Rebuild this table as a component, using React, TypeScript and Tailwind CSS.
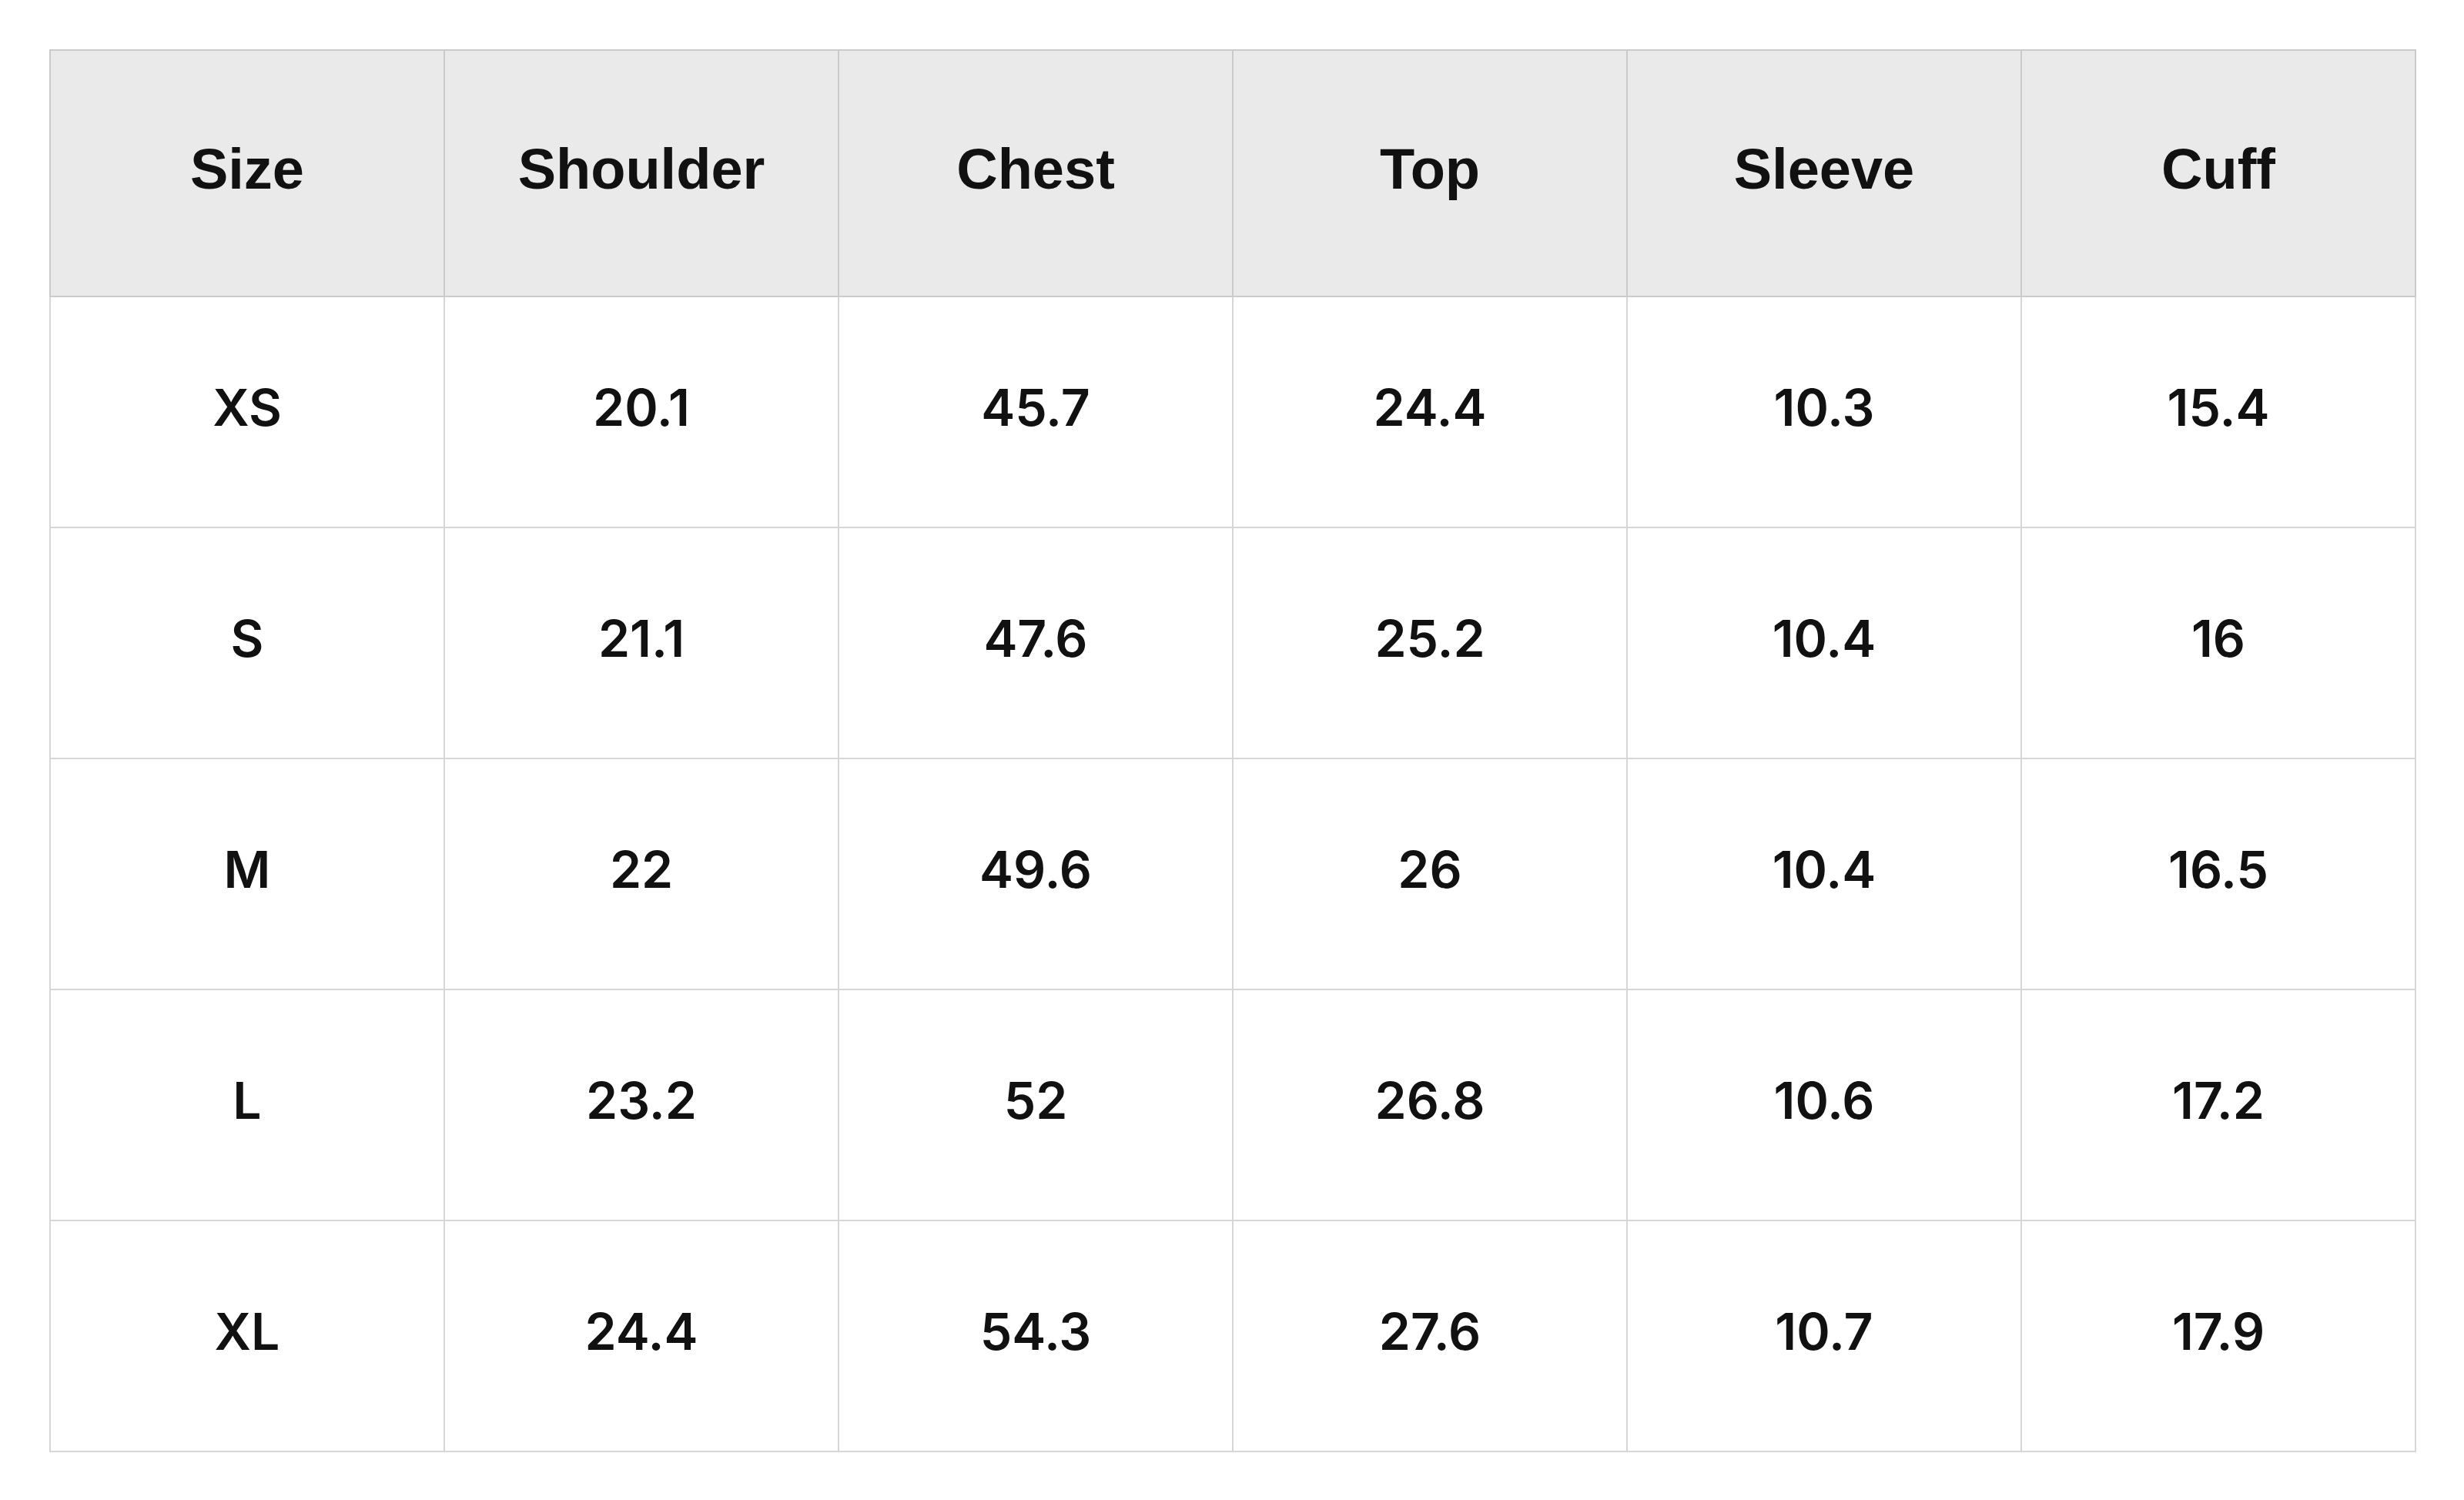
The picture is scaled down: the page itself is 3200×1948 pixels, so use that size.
const headers = ["Size", "Shoulder", "Chest", "Top", "Sleeve", "Cuff"];

const rows: string[][] = [
  ["XS", "20.1", "45.7", "24.4", "10.3", "15.4"],
  ["S", "21.1", "47.6", "25.2", "10.4", "16"],
  ["M", "22", "49.6", "26", "10.4", "16.5"],
  ["L", "23.2", "52", "26.8", "10.6", "17.2"],
  ["XL", "24.4", "54.3", "27.6", "10.7", "17.9"],
];

export default function App() {
  return (
    <div className="min-h-screen bg-white p-[64px]">
      <table className="w-[3074px] table-fixed border-collapse text-[#111111]">
        <thead>
          <tr className="bg-[#eaeaea]">
            {headers.map((h) => (
              <th
                key={h}
                className="h-[320px] border-2 border-[#cbcbcb] p-0 pb-[12px] text-center align-middle font-['Liberation_Sans',Arial,sans-serif] text-[74px] font-bold"
              >
                {h}
              </th>
            ))}
          </tr>
        </thead>
        <tbody>
          {rows.map((row) => (
            <tr key={row[0]}>
              {row.map((cell, i) => (
                <td
                  key={i}
                  className="h-[300px] border-2 border-[#d6d6d6] p-0 pb-[12px] text-center align-middle font-['Inter',sans-serif] text-[66px] font-semibold"
                >
                  {cell}
                </td>
              ))}
            </tr>
          ))}
        </tbody>
      </table>
    </div>
  );
}
